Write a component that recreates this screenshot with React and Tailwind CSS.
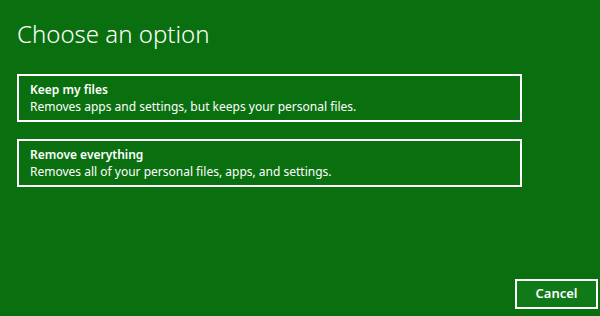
import React from "react";

const options = [
  {
    title: "Keep my files",
    desc: "Removes apps and settings, but keeps your personal files.",
  },
  {
    title: "Remove everything",
    desc: "Removes all of your personal files, apps, and settings.",
  },
];

const OptionBox = ({ title, desc }) => (
  <button className="w-[505px] h-[48px] border-2 border-white text-left pl-[11px] pt-[5px] flex flex-col text-white">
    <span className="text-[12px] leading-[17px] font-semibold">{title}</span>
    <span className="text-[12px] leading-[17px]">{desc}</span>
  </button>
);

export default function App() {
  return (
    <div
      className="w-[600px] h-[316px] bg-[#0a700f] flex flex-col pl-[17px] text-white"
      style={{ fontFamily: '"Noto Sans", "Open Sans", sans-serif' }}
    >
      <h1 className="text-[24px] font-light leading-[32px] mt-[18px]">Choose an option</h1>
      <div className="flex flex-col gap-[17px] mt-[24px]">
        {options.map((o) => (
          <OptionBox key={o.title} title={o.title} desc={o.desc} />
        ))}
      </div>
      <button className="mt-auto mb-[7px] mr-[2px] self-end w-[83px] h-[30px] border-2 border-white bg-[#0f7a17] text-[13px] font-semibold">
        Cancel
      </button>
    </div>
  );
}
